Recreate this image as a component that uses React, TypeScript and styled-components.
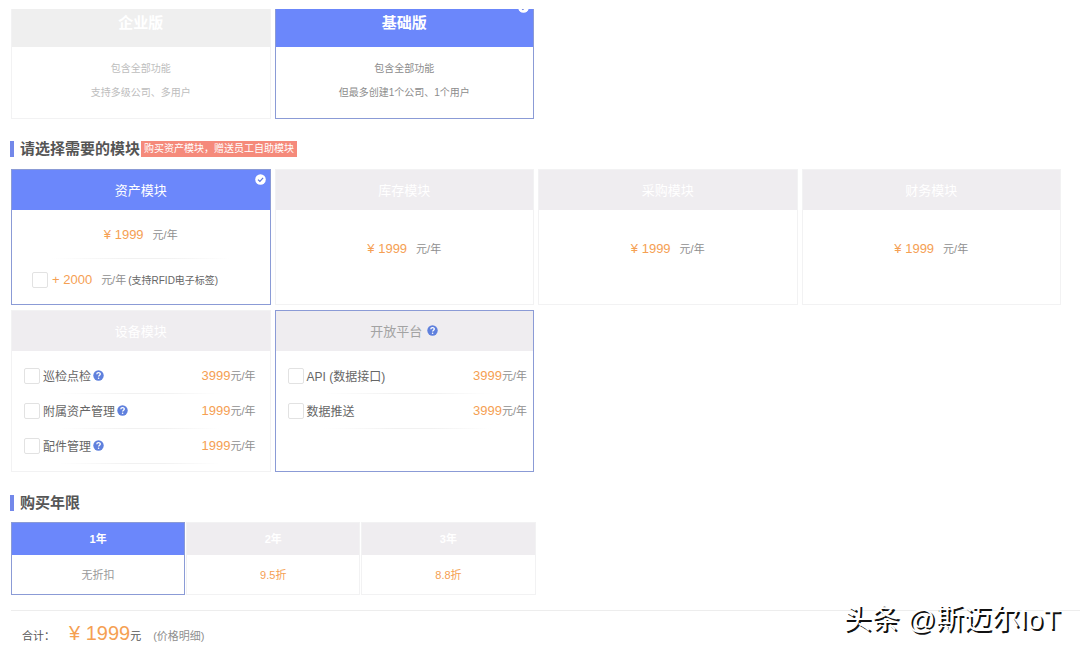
import React, { useState } from 'react';
import styled, { createGlobalStyle, css } from 'styled-components';

const BLUE = '#6b87fb';
const BLUE_LINE = '#8b9bd6';
const GREY = '#efedf0';
const GREY_LINE = '#f2f2f3';
const ORANGE = '#f5a053';

const GlobalStyle = createGlobalStyle`
  *, *::before, *::after { box-sizing: border-box; }
  body {
    margin: 0;
    background: #fff;
    color: #555;
    font-family: "Liberation Sans", "Noto Sans CJK SC", sans-serif;
    font-size: 12px;
  }
  button {
    margin: 0;
    padding: 0;
    border: 0;
    background: none;
    font: inherit;
    color: inherit;
    cursor: pointer;
  }
  p, h2 { margin: 0; }
`;

const Page = styled.main`
  padding-top: 9px;
`;

const Content = styled.div`
  padding: 0 19px 0 10px;
`;

const Grid = styled.div`
  display: grid;
  grid-template-columns: repeat(4, minmax(0, 1fr));
  gap: 5px 4px;
  padding-left: 1px;
`;

const frame = css<{ $active?: boolean }>`
  position: relative;
  display: flex;
  flex-direction: column;
  overflow: hidden;
  border: 1px solid ${(p) => (p.$active ? BLUE_LINE : GREY_LINE)};
`;

const EditionCard = styled.button<{ $active: boolean }>`
  ${frame}
  height: 110px;
  border-top: 0;
`;

const EditionHead = styled.span<{ $active: boolean }>`
  display: block;
  align-self: stretch;
  height: 38px;
  line-height: 28px;
  font-size: 15px;
  font-weight: 700;
  color: #fff;
  background: ${(p) => (p.$active ? BLUE : '#efefef')};
`;

const EditionBody = styled.span<{ $active: boolean }>`
  display: block;
  align-self: stretch;
  padding-top: 10px;
  font-size: 10px;
  line-height: 24px;
  color: ${(p) => (p.$active ? '#8c8c8c' : '#bdbdbd')};
`;

const Line = styled.span`
  display: block;
`;

const SectionTitle = styled.div`
  display: flex;
  align-items: center;
  gap: 1px;
  height: 20px;
`;

const TitleText = styled.h2`
  display: flex;
  align-items: center;
  gap: 6px;
  font-size: 15px;
  line-height: 20px;
  font-weight: 700;
  color: #555;

  &::before {
    content: '';
    width: 4px;
    height: 16px;
    background: #7388ea;
  }
`;

const Promo = styled.span`
  padding: 0 3px;
  font-size: 10px;
  line-height: 16px;
  color: #fff;
  background: #f58a7b;
`;

const Modules = styled.section`
  padding-top: 20px;
`;

const ModuleGrid = styled(Grid)`
  margin-top: 10px;
`;

const ModuleCard = styled.article<{ $active?: boolean; $tall?: boolean }>`
  ${frame}
  min-height: ${(p) => (p.$tall ? 162 : 136)}px;
`;

const ModuleHead = styled.button<{ $active?: boolean; $muted?: boolean }>`
  display: flex;
  align-items: center;
  justify-content: center;
  gap: 5px;
  height: 40px;
  padding-bottom: 2px;
  font-size: 13px;
  color: ${(p) => (p.$muted ? '#a3a3a3' : '#fff')};
  background: ${(p) => (p.$active ? BLUE : GREY)};
`;

const Badge = styled.span<{ $clipped?: boolean }>`
  position: absolute;
  top: ${(p) => (p.$clipped ? -7 : 4)}px;
  right: 4px;
  display: flex;
`;

const PriceBody = styled.div`
  display: flex;
  align-items: center;
  justify-content: center;
  height: 78px;
`;

const faintRule = css`
  background: linear-gradient(90deg, transparent 15%, #f1f1f1 45%, #f1f1f1 60%, transparent 85%) bottom / 100% 1px no-repeat;
`;

const PriceRow = styled.div`
  display: flex;
  align-items: center;
  justify-content: center;
  height: 49px;
  ${faintRule}
`;

const ExtraRow = styled.label`
  display: flex;
  align-items: center;
  gap: 4px;
  height: 42px;
  padding-left: 20px;
`;

const Price = styled.span`
  display: inline-flex;
  align-items: baseline;
  padding-bottom: 2px;
  white-space: pre;
`;

const Amount = styled.span`
  font-size: 13px;
  color: ${ORANGE};
`;

const Unit = styled.span<{ $spaced?: boolean }>`
  margin-left: ${(p) => (p.$spaced ? 9 : 0)}px;
  font-size: 11px;
  color: #8f8f8f;
`;

const Note = styled.span`
  margin-left: 2px;
  font-size: 10px;
  color: #666;
`;

const Options = styled.ul<{ $tight?: boolean }>`
  margin: 0;
  padding: 8px ${(p) => (p.$tight ? 6 : 14)}px 0 12px;
  list-style: none;
`;

const Option = styled.li`
  display: flex;
  align-items: center;
  justify-content: space-between;
  height: 35px;
  padding-bottom: 2px;
  ${faintRule}
`;

const OptionName = styled.span`
  display: flex;
  align-items: center;
  gap: 2px;
`;

const CheckLabel = styled.label`
  display: flex;
  align-items: center;
  gap: 3px;
  font-size: 12px;
  color: #666;
`;

const Check = styled.input`
  appearance: none;
  width: 16px;
  height: 16px;
  margin: 0;
  border: 1px solid #e2e2e2;
  border-radius: 2px;
  background: #fff;

  &:checked {
    border-color: ${BLUE};
    background: ${BLUE};
  }
`;

const HelpButton = styled.button`
  display: flex;
`;

const Years = styled.section`
  padding-top: 21px;
`;

const YearGrid = styled.div`
  display: grid;
  grid-template-columns: repeat(3, minmax(0, 1fr));
  gap: 1px;
  width: 50%;
  margin-top: 9px;
  padding-left: 1px;
`;

const YearCard = styled.button<{ $active: boolean }>`
  ${frame}
  height: 73px;
`;

const YearHead = styled.span<{ $active: boolean }>`
  align-self: stretch;
  line-height: 32px;
  font-size: 11px;
  font-weight: 700;
  color: #fff;
  background: ${(p) => (p.$active ? BLUE : GREY)};
`;

const YearBody = styled.span<{ $deal: boolean }>`
  align-self: stretch;
  line-height: 40px;
  font-size: 11px;
  color: ${(p) => (p.$deal ? ORANGE : '#999')};
`;

const Footer = styled.footer`
  position: relative;
  margin: 15px 0 0 11px;
  border-top: 1px solid #ededed;
`;

const Total = styled.div`
  display: flex;
  align-items: baseline;
  padding: 8px 0 6px 11px;
  font-size: 11px;
  line-height: 28px;
`;

const TotalAmount = styled.span`
  margin-left: 14px;
  font-size: 20px;
  color: ${ORANGE};
`;

const Detail = styled.a`
  margin-left: 12px;
  color: #8f8f8f;
  text-decoration: none;
`;

const Signature = styled.p`
  position: absolute;
  top: -9px;
  right: 20px;
  font-size: 28px;
  line-height: 36px;
  color: #fff;
  text-shadow: 2px 2px 0 #111;
  white-space: nowrap;
`;

function CheckedIcon() {
  return (
    <svg width="11" height="11" viewBox="0 0 11 11" aria-hidden="true">
      <circle cx="5.5" cy="5.5" r="5.3" fill="#fff" />
      <path d="M3 5.6 4.9 7.4 8.1 3.9" fill="none" stroke="#5d74d8" strokeWidth="1.2" />
    </svg>
  );
}

function HelpIcon() {
  return (
    <svg width="11" height="11" viewBox="0 0 11 11" aria-hidden="true">
      <circle cx="5.5" cy="5.5" r="5.2" fill="#5f80dd" />
      <path
        d="M3.8 4.3C3.8 2 7.3 2.1 7.3 4.1 7.3 5.3 5.6 5.2 5.6 6.6"
        fill="none"
        stroke="#fff"
        strokeWidth="1.3"
      />
      <circle cx="5.6" cy="8.3" r="0.8" fill="#fff" />
    </svg>
  );
}

const EDITIONS = [
  { name: '企业版', lines: ['包含全部功能', '支持多级公司、多用户'] },
  { name: '基础版', lines: ['包含全部功能', '但最多创建1个公司、1个用户'] },
];

const DEVICE_OPTIONS = [
  { name: '巡检点检', price: '3999', help: true },
  { name: '附属资产管理', price: '1999', help: true },
  { name: '配件管理', price: '1999', help: true },
];

const PLATFORM_OPTIONS = [
  { name: 'API (数据接口)', price: '3999', help: false },
  { name: '数据推送', price: '3999', help: false },
];

const YEARS = [
  { name: '1年', discount: '无折扣', deal: false },
  { name: '2年', discount: '9.5折', deal: true },
  { name: '3年', discount: '8.8折', deal: true },
];

function OptionList({ items, tight }: { items: typeof DEVICE_OPTIONS; tight?: boolean }) {
  return (
    <Options $tight={tight}>
      {items.map((item) => (
        <Option key={item.name}>
          <OptionName>
            <CheckLabel>
              <Check type="checkbox" />
              {item.name}
            </CheckLabel>
            {item.help && (
              <HelpButton type="button">
                <HelpIcon />
              </HelpButton>
            )}
          </OptionName>
          <Price>
            <Amount>{item.price}</Amount>
            <Unit>元/年</Unit>
          </Price>
        </Option>
      ))}
    </Options>
  );
}

export default function App() {
  const [edition, setEdition] = useState(1);
  const [year, setYear] = useState(0);

  return (
    <Page>
      <GlobalStyle />
      <Content>
        <Grid>
          {EDITIONS.map((item, i) => (
            <EditionCard key={item.name} type="button" $active={edition === i} onClick={() => setEdition(i)}>
              <EditionHead $active={edition === i}>{item.name}</EditionHead>
              <EditionBody $active={edition === i}>
                {item.lines.map((line) => (
                  <Line key={line}>{line}</Line>
                ))}
              </EditionBody>
              {edition === i && (
                <Badge $clipped>
                  <CheckedIcon />
                </Badge>
              )}
            </EditionCard>
          ))}
        </Grid>

        <Modules>
          <SectionTitle>
            <TitleText>请选择需要的模块</TitleText>
            <Promo>购买资产模块，赠送员工自助模块</Promo>
          </SectionTitle>
          <ModuleGrid>
            <ModuleCard $active>
              <ModuleHead type="button" $active>
                资产模块
              </ModuleHead>
              <Badge>
                <CheckedIcon />
              </Badge>
              <PriceRow>
                <Price>
                  <Amount>¥ 1999</Amount>
                  <Unit $spaced>元/年</Unit>
                </Price>
              </PriceRow>
              <ExtraRow>
                <Check type="checkbox" />
                <Price>
                  <Amount>+ 2000</Amount>
                  <Unit $spaced>元/年</Unit>
                  <Note>(支持RFID电子标签)</Note>
                </Price>
              </ExtraRow>
            </ModuleCard>
            {['库存模块', '采购模块', '财务模块'].map((name) => (
              <ModuleCard key={name}>
                <ModuleHead type="button">{name}</ModuleHead>
                <PriceBody>
                  <Price>
                    <Amount>¥ 1999</Amount>
                    <Unit $spaced>元/年</Unit>
                  </Price>
                </PriceBody>
              </ModuleCard>
            ))}
            <ModuleCard $tall>
              <ModuleHead type="button">设备模块</ModuleHead>
              <OptionList items={DEVICE_OPTIONS} />
            </ModuleCard>
            <ModuleCard $tall $active>
              <ModuleHead type="button" $muted>
                开放平台
                <HelpIcon />
              </ModuleHead>
              <OptionList items={PLATFORM_OPTIONS} tight />
            </ModuleCard>
          </ModuleGrid>
        </Modules>

        <Years>
          <SectionTitle>
            <TitleText>购买年限</TitleText>
          </SectionTitle>
          <YearGrid>
            {YEARS.map((item, i) => (
              <YearCard key={item.name} type="button" $active={year === i} onClick={() => setYear(i)}>
                <YearHead $active={year === i}>{item.name}</YearHead>
                <YearBody $deal={item.deal}>{item.discount}</YearBody>
              </YearCard>
            ))}
          </YearGrid>
        </Years>
      </Content>

      <Footer>
        <Total>
          <span>合计：</span>
          <TotalAmount>¥ 1999</TotalAmount>
          <span>元</span>
          <Detail href="#detail">(价格明细)</Detail>
        </Total>
        <Signature>头条 @斯迈尔IoT</Signature>
      </Footer>
    </Page>
  );
}
